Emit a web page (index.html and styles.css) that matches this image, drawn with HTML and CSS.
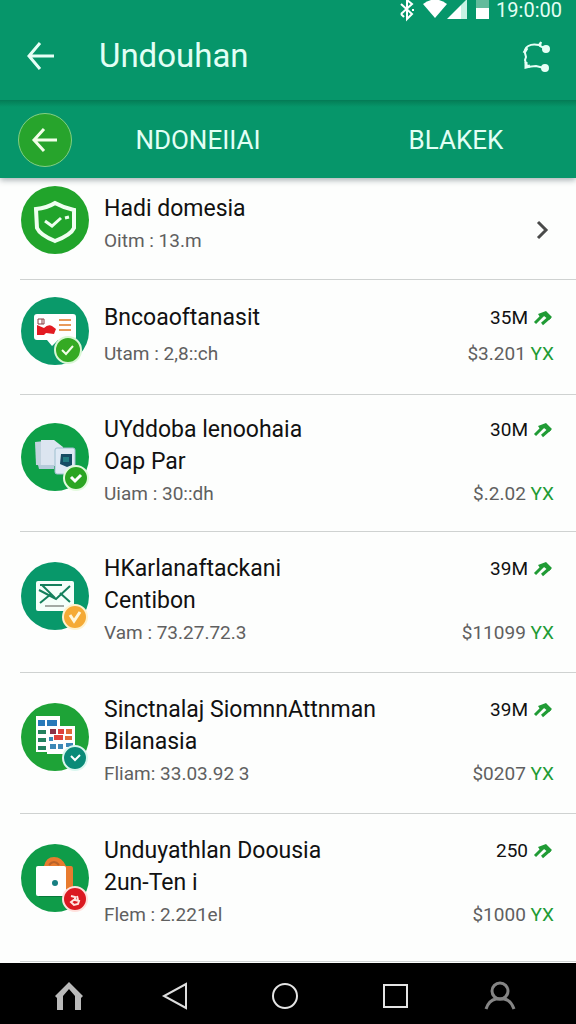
FILE: index.html
```
<!DOCTYPE html>
<html lang="id">
<head>
    <meta charset="UTF-8">
    <meta name="viewport" content="width=device-width, initial-scale=1.0">
    <title>Undouhan</title>
    <link rel="stylesheet" href="styles.css">
</head>
<body>
    <header class="app-header">
        <div class="status-bar">
            <svg width="16" height="20" viewBox="0 0 16 20" fill="none" stroke="#fff" stroke-width="2"><path d="M2 4l11 10-5 5V0l5 4L2 14M2 14l3 3M13 10h2"/></svg>
            <svg width="24" height="20" viewBox="0 0 24 20"><path d="M0 4Q12-5 24 4L12 18z" fill="#fff"/></svg>
            <svg width="21" height="20" viewBox="0 0 21 20"><path d="M0 19L14 5v14z" fill="#fff"/><path d="M14 5l6-6v20h-6z" fill="#c8f3e4"/></svg>
            <svg class="battery" width="14" height="20" viewBox="0 0 14 20"><path d="M0 0h13v8H0z" fill="#62bb9c"/><path d="M0 8h13v11H0z" fill="#fff"/></svg>
            <span class="clock">19:0:00</span>
        </div>
        <div class="app-bar">
            <button class="icon-button" aria-label="Back">
                <svg width="28" height="30" viewBox="0 0 28 30" fill="none" stroke="#e6fff6" stroke-width="3"><path d="M28 15H3M14 2L3 15l11 13"/></svg>
            </button>
            <h1>Undouhan</h1>
            <button class="icon-button" aria-label="Share">
                <svg width="28" height="32" viewBox="0 0 28 32" fill="none" stroke="#e6fff6" stroke-width="2"><path d="M24 9l-6-3 1-4-2 3C8 3 2 7 3 13l1 4-1 3 2 7 9-1 8 2"/><path d="M2 13l3-5M4 22v5l4-1" stroke-width="3"/><circle cx="24" cy="9" r="3" fill="#e6fff6"/><circle cx="23" cy="28" r="3" fill="#e6fff6"/></svg>
            </button>
        </div>
        <nav class="tabs">
            <button class="round-back" aria-label="Previous">
                <svg width="26" height="26" viewBox="0 0 26 26" fill="none" stroke="#f2ffe9" stroke-width="3"><path d="M25 13H3M12 2L2 13l10 11"/></svg>
            </button>
            <button class="tab">NDONEIIAI</button>
            <button class="tab tab-last">BLAKEK</button>
        </nav>
    </header>

    <main>
        <ul class="list">
            <li class="row row-first">
                <svg class="avatar" width="70" height="70" viewBox="0 0 70 70">
                    <circle cx="35" cy="35" r="34" fill="#21a42b"/>
                    <path d="M16 24Q27 23 35 18q9 5 19 7v18q-3 7-19 13-15-6-18-13z" fill="none" stroke="#effff0" stroke-width="4"/>
                    <path d="M25 36l7 5 9-8M45 33l4-1" fill="none" stroke="#effff0" stroke-width="3"/>
                </svg>
                <div class="info">
                    <h2>Hadi domesia</h2>
                    <p>Oitm : 13.m</p>
                </div>
                <button class="chevron" aria-label="Open">
                    <svg width="12" height="20" viewBox="0 0 12 20" fill="none" stroke="#4a4a4a" stroke-width="3"><path d="M2 2l8 8-8 8"/></svg>
                </button>
            </li>
            <li class="row row-short">
                <svg class="avatar" width="70" height="70" viewBox="0 0 70 70">
                    <circle cx="35" cy="35" r="34" fill="#0a9a6a"/>
                    <path d="M17 18h36q3 0 3 3v20q0 3-3 3H38l-6 6-5-6H17q-3 0-3-3V21q0-3 3-3z" fill="#fff"/>
                    <path d="M18 23h6v5h-6zM22 23v5" fill="none" stroke="#8b3d40" stroke-width="1"/>
                    <path d="M17 29l7 3q4-4 8-2l4 3-2 5-8-1-2 2h-7z" fill="#e31b22"/>
                    <path d="M39 24h12M39 29h12M39 34h12" stroke="#e89a5b" stroke-width="2"/>
                    <circle cx="48" cy="54" r="13" fill="#35aa23" stroke="#d9f7d5" stroke-width="2"/>
                    <path d="M42 54l4 4 7-8" fill="none" stroke="#f4ffe8" stroke-width="2"/>
                </svg>
                <div class="info">
                    <h2>Bncoaoftanasit</h2>
                    <p>Utam : 2,8::ch</p>
                </div>
                <div class="amounts">
                    <span class="size">35M <svg class="trend" width="19" height="18" viewBox="0 0 19 18"><use href="#trend"/></svg></span>
                    <span class="price">$3.201 <b>YX</b></span>
                </div>
            </li>
            <li class="row row-third">
                <svg class="avatar" width="70" height="70" viewBox="0 0 70 70">
                    <circle cx="35" cy="35" r="34" fill="#0ea048"/>
                    <path d="M15 20l19-2 3 26-21-1z" fill="#c3d3df"/>
                    <path d="M21 18h13l9 7v19H24l-3-1z" fill="#dce5f0"/>
                    <path d="M18 43h16v4H19z" fill="#b5cbda"/>
                    <rect x="35" y="26" width="20" height="26" rx="2" fill="#dfe9f5" stroke="#9ebfcf"/>
                    <path d="M41 32h11v11l-5 2-7-3z" fill="#164c64"/>
                    <path d="M43 35h6v5h-6z" fill="#237d83"/>
                    <circle cx="56" cy="56" r="12" fill="#2ba522" stroke="#e2fadd" stroke-width="2"/>
                    <path d="M51 55l4 4 6-6" fill="none" stroke="#fff" stroke-width="3"/>
                </svg>
                <div class="info">
                    <h2>UYddoba lenoohaia<br>Oap Par</h2>
                    <p>Uiam : 30::dh</p>
                </div>
                <div class="amounts">
                    <span class="size">30M <svg class="trend" width="19" height="18" viewBox="0 0 19 18"><use href="#trend"/></svg></span>
                    <span class="price">$.2.02 <b>YX</b></span>
                </div>
            </li>
            <li class="row">
                <svg class="avatar" width="70" height="70" viewBox="0 0 70 70">
                    <circle cx="35" cy="35" r="34" fill="#08986a"/>
                    <rect x="16" y="20" width="38" height="30" rx="2" fill="#f5fffa"/>
                    <path d="M20 24h22M20 42l11-9M40 32l10 9" fill="none" stroke="#14805c" stroke-width="2"/>
                    <path d="M19 29l17 9 14-13" fill="none" stroke="#14805c" stroke-width="2"/>
                    <path d="M22 24l13 13" fill="none" stroke="#14805c" stroke-width="2"/>
                    <path d="M25 45h19" stroke="#a3aaa4" stroke-width="2"/>
                    <circle cx="55" cy="56" r="12" fill="#f5aa35" stroke="#fff2ce" stroke-width="2"/>
                    <path d="M50 54l4 6 6-9" fill="none" stroke="#fff7dc" stroke-width="3"/>
                </svg>
                <div class="info">
                    <h2>HKarlanaftackani<br>Centibon</h2>
                    <p>Vam : 73.27.72.3</p>
                </div>
                <div class="amounts">
                    <span class="size">39M <svg class="trend" width="19" height="18" viewBox="0 0 19 18"><use href="#trend"/></svg></span>
                    <span class="price">$11099 <b>YX</b></span>
                </div>
            </li>
            <li class="row">
                <svg class="avatar" width="70" height="70" viewBox="0 0 70 70">
                    <circle cx="35" cy="35" r="34" fill="#1ea337"/>
                    <path d="M16 14h24v10h15v28H27v-2H16z" fill="#fff"/>
                    <path d="M18 18h7v6h-7zM27 18h10v6H27z" fill="#2879b9"/>
                    <path d="M18 28h8v4h-8zM18 36h8v4h-8zM18 44h8v4h-8z" fill="#23815f"/>
                    <path d="M30 27h6v5h-6z" fill="#8c3046"/><path d="M38 27h6v5h-6zM34 33h9v5h-9z" fill="#df413d"/><path d="M46 27h6v5h-6zM45 34h7v4h-7z" fill="#e06a38"/>
                    <path d="M29 35h4v4h-4zM30 42h6v5h-6zM38 42h5v5h-5zM46 41h7v4h-7z" fill="#3c88b7"/>
                    <circle cx="55" cy="56" r="12" fill="#0a8b78" stroke="#d9f7ef" stroke-width="2"/>
                    <path d="M51 54l4 4 5-5" fill="none" stroke="#fff" stroke-width="2"/>
                </svg>
                <div class="info">
                    <h2>Sinctnalaj SiomnnAttnman<br>Bilanasia</h2>
                    <p>Fliam: 33.03.92 3</p>
                </div>
                <div class="amounts">
                    <span class="size">39M <svg class="trend" width="19" height="18" viewBox="0 0 19 18"><use href="#trend"/></svg></span>
                    <span class="price">$0207 <b>YX</b></span>
                </div>
            </li>
            <li class="row row-last">
                <svg class="avatar" width="70" height="70" viewBox="0 0 70 70">
                    <circle cx="35" cy="35" r="34" fill="#0f9c49"/>
                    <path d="M24 23q2-9 10-9t12 9h5q2 0 2 3v21H39V23z" fill="#e87b2f"/>
                    <path d="M29 22q5-6 10 0" fill="none" stroke="#b9632b" stroke-width="2"/>
                    <path d="M19 54h27v-3H19z" fill="#08783a"/>
                    <rect x="16" y="23" width="30" height="30" rx="2" fill="#fff"/>
                    <circle cx="35" cy="40" r="3" fill="#177f82"/>
                    <circle cx="55" cy="56" r="12" fill="#db1921" stroke="#ffe1dd" stroke-width="2"/>
                    <path d="M51 53l4 1v3l4 1-1 3-4 1-3-3 4-3M57 53l1 4" fill="none" stroke="#ffe5e1" stroke-width="2"/>
                </svg>
                <div class="info">
                    <h2>Unduyathlan Doousia<br>2un-Ten i</h2>
                    <p>Flem : 2.221el</p>
                </div>
                <div class="amounts">
                    <span class="size">250 <svg class="trend" width="19" height="18" viewBox="0 0 19 18"><use href="#trend"/></svg></span>
                    <span class="price">$1000 <b>YX</b></span>
                </div>
            </li>
        </ul>
    </main>

    <nav class="nav-bar">
        <button aria-label="Home"><svg width="28" height="30" viewBox="0 0 28 30"><path d="M14 1L0 15l2 2v12h6V15l6-7 6 7v14h6V17l2-2z" fill="#b9b9b9"/></svg></button>
        <button aria-label="Back"><svg width="28" height="30" viewBox="0 0 28 30" fill="none" stroke="#ddd" stroke-width="2"><path d="M23 3v24L1 15z"/></svg></button>
        <button aria-label="Circle"><svg width="28" height="28" viewBox="0 0 28 28" fill="none" stroke="#e4e4e4" stroke-width="2"><circle cx="15" cy="14" r="12"/></svg></button>
        <button aria-label="Recent"><svg width="28" height="28" viewBox="0 0 28 28" fill="none" stroke="#e4e4e4" stroke-width="2"><rect x="6" y="3" width="23" height="22"/></svg></button>
        <button aria-label="Profile"><svg width="32" height="30" viewBox="0 0 32 30" fill="none" stroke="#858585" stroke-width="3"><circle cx="16" cy="10" r="8"/><path d="M2 28Q5 19 12 18h8q7 1 10 10"/></svg></button>
    </nav>

    <!-- Shared trend arrow -->
    <svg class="defs" width="0" height="0" aria-hidden="true">
        <symbol id="trend" viewBox="0 0 19 18">
            <path d="M2 14l8-8M9 15l8-7" fill="none" stroke="#209b35" stroke-width="3"/>
            <path d="M5 5l8-3 6 6-3 3-5-4-4 1z" fill="#209b35"/>
        </symbol>
    </svg>
</body>
</html>
```
FILE: styles.css
```
* {
    box-sizing: border-box;
}

body {
    margin: 0;
    min-height: 100vh;
    display: flex;
    flex-direction: column;
    background: #fdfefd;
    font-family: Roboto, "Liberation Sans", sans-serif;
    color: #111;
}

button {
    padding: 0;
    border: none;
    background: none;
    color: inherit;
    font-family: inherit;
    cursor: pointer;
}

svg {
    display: block;
    flex: none;
    overflow: visible;
}

h1, h2, p, ul {
    margin: 0;
    padding: 0;
    font-weight: 400;
}

.defs {
    position: absolute;
}

/* Header */
.app-header {
    background: #06966a;
    color: #e2fff5;
    box-shadow: 0 2px 6px rgba(30, 50, 60, 0.4);
}

.status-bar {
    display: flex;
    justify-content: flex-end;
    align-items: center;
    height: 20px;
    padding-right: 14px;
}

.status-bar svg + svg {
    margin-left: 8px;
}

.status-bar svg:nth-child(3) {
    margin-left: 0;
}

.clock {
    margin-left: 6px;
    font-size: 20px;
    line-height: 20px;
}

.app-bar {
    display: flex;
    align-items: center;
    height: 81px;
    padding: 0 26px 9px;
    border-bottom: 1px solid #047c57;
}

.app-bar h1 {
    flex: 1;
    margin-left: 45px;
    font-size: 33px;
    line-height: 40px;
}

.tabs {
    display: grid;
    grid-template-columns: 54px 1fr 1fr;
    align-items: center;
    height: 77px;
    padding-left: 18px;
    background: linear-gradient(#048058, #06966a 6px);
}

.round-back {
    display: flex;
    align-items: center;
    justify-content: center;
    height: 54px;
    border: 1px solid #83cf83;
    border-radius: 50%;
    background: #27a42c;
}

.tab {
    font-size: 26px;
    line-height: 32px;
    font-weight: 400;
}

.tab-last {
    padding-left: 12px;
}

/* List */
main {
    flex: 1;
}

.list {
    padding-left: 20px;
    list-style: none;
}

.row {
    display: flex;
    align-items: center;
    padding: 21px 22px 23px 0;
    border-bottom: 1px solid #cfd2d1;
}

.row-first {
    padding-top: 15px;
    padding-bottom: 22px;
}

.row-short {
    padding-top: 22px;
    padding-bottom: 24px;
}

.row-third {
    padding-top: 19px;
    padding-bottom: 21px;
}

.row-last {
    padding-bottom: 30px;
}

.avatar {
    margin-top: -10px;
}

.info {
    flex: 1;
    margin-left: 14px;
}

.info h2 {
    font-size: 23px;
    line-height: 32px;
}

.info p {
    font-size: 19px;
    line-height: 32px;
    color: #606060;
}

.row-short p,
.row-short .price {
    margin-top: 4px;
}

.chevron {
    margin-top: 10px;
    margin-right: 6px;
}

.amounts {
    display: flex;
    flex-direction: column;
    justify-content: space-between;
    align-items: flex-end;
    align-self: stretch;
    font-size: 19px;
    line-height: 32px;
}

.size {
    display: flex;
    align-items: center;
    gap: 5px;
    padding-right: 2px;
}

.price {
    color: #606060;
}

.price b {
    font-weight: 400;
    color: #209b35;
}

/* System navigation */
.nav-bar {
    display: grid;
    grid-template-columns: repeat(5, 1fr);
    height: 61px;
    padding: 4px 22px 0 15px;
    background: #000;
}

.nav-bar button {
    display: flex;
    align-items: center;
    justify-content: center;
}
```
